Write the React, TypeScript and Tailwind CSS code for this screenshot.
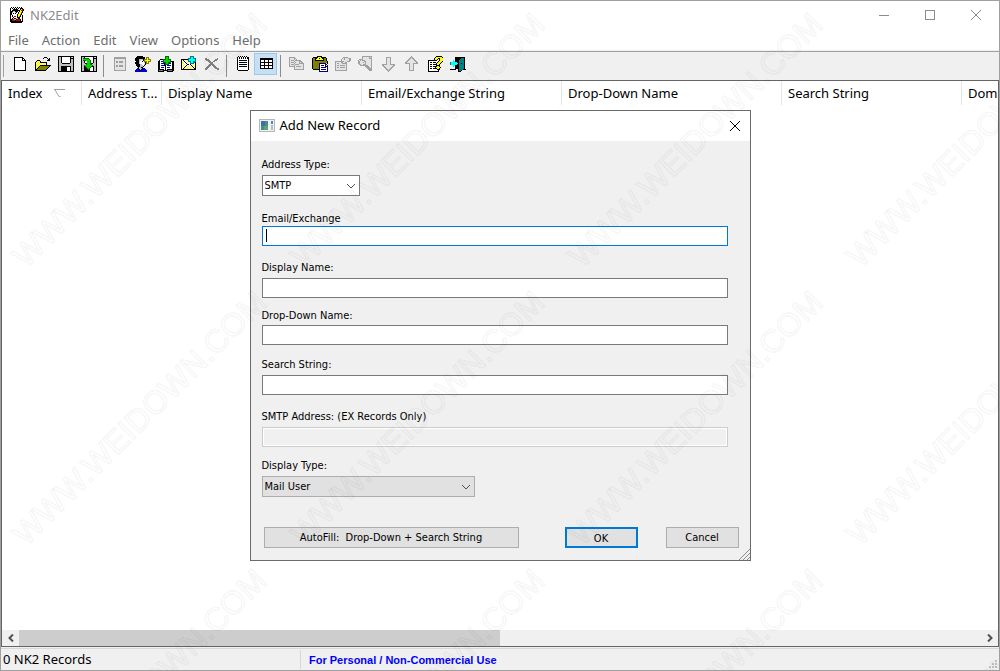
import type { ReactNode } from 'react'

const palette: Record<string, string> = {
  k: '#000000', w: '#ffffff', s: '#c0c0c0', g: '#a0a0a0', d: '#808080', e: '#e4e4e4',
  y: '#ffff00', o: '#808000', b: '#000080', u: '#0000d0', n: '#00d800', m: '#007000',
  c: '#00ffff', t: '#008080', r: '#c00000', f: '#fff8a0',
}

const icons: Record<string, string[]> = {
  app: [
    '..k.k.k.k.k.k...',
    '.kwkwkwkwkwkkk..',
    '.kwwkkkkkwwkyrk.',
    '.kwkkkkkkkkyrrk.',
    '.kkksskkkwkyyk..',
    '.kkswwskwkyyok..',
    '.kkwkwkwwkyyk...',
    '.kkwwwwwkyyok...',
    '.kwkwwwwkyykwk..',
    '.kwkwrrwkyokwk..',
    '.kwwkwwwkkkwwk..',
    '.kwkskksskkwwk..',
    '.kkrrsskrrrkwk..',
    '.kkrrrkrrrrkwk..',
    '.kkkkkkkkkkkkk..',
    '..kkkkkkkkkkk...',
  ],
  blank: [
    '................',
    '..kkkkkkkkk.....',
    '..kwwwwwwwkk....',
    '..kwwwwwwwkwk...',
    '..kwwwwwwwkkkk..',
    '..kwwwwwwwwwwk..',
    '..kwwwwwwwwwwk..',
    '..kwwwwwwwwwwk..',
    '..kwwwwwwwwwwk..',
    '..kwwwwwwwwwwk..',
    '..kwwwwwwwwwwk..',
    '..kwwwwwwwwwwk..',
    '..kwwwwwwwwwwk..',
    '..kwwwwwwwwwwk..',
    '..kkkkkkkkkkkk..',
    '................',
  ],
  open: [
    '................',
    '.........kkk....',
    '........k...k.k.',
    '.............kk.',
    '..kkk.......kkk.',
    '.kyfyk..........',
    'kyfyfkkkkkkk....',
    'kfyfyfyfyfyk....',
    'kyfyfyfyfyfk....',
    'kfyfykkkkkkkkkkk',
    'kyfykoooooooook.',
    'kfykoooooooook..',
    'kykoooooooook...',
    'kkoooooooook....',
    'kkkkkkkkkkk.....',
    '................',
  ],
  save: [
    'kkkkkkkkkkkkkkkk',
    'ksskwwwwwwwwksek',
    'ksskwwwwwwwwkkkk',
    'ksskwwwwwwwwkssk',
    'ksskwwwwwwwwkssk',
    'ksskwwwwwwwwkssk',
    'ksskwwwwwwwwkssk',
    'kssskkkkkkkksssk',
    'kssssssssssssssk',
    'kssssssssssssssk',
    'ksskkkkkkkkkkssk',
    'ksskkkkkkwwwkssk',
    'ksskkkkkkwwwkssk',
    'ksskkkkkkwwwkssk',
    'ksskkkkkkwwwkssk',
    'kkkkkkkkkkkkkkkk',
  ],
  saveAs: [
    'kkkkkkkkkkkkkkkk',
    'ksskwwwwwwwwksek',
    'ksmmmmmmwwwwkkkk',
    'ksnnnnnnmwwwkssk',
    'ksmmmnnnnmwwkssk',
    'ksskwwnnnmwwkssk',
    'ksskwwnnnmwwkssk',
    'kssskknnnmkksssk',
    'kssssmnnnmmssssk',
    'kssmnnnnnnnmsssk',
    'ksskmnnnnnmkkssk',
    'ksskkmnnnmwwkssk',
    'ksskkkmnmwwwkssk',
    'ksskkkkmkwwwkssk',
    'ksskkkkkkwwwkssk',
    'kkkkkkkkkkkkkkkk',
  ],
  record: [
    '................',
    '..gggggggggggg..',
    '..gggggggggggg..',
    '..geeeeeeeeeeg..',
    '..geeeeeeeeeeg..',
    '..geggeggggeeg..',
    '..geggeggggeeg..',
    '..geeeeeeeeeeg..',
    '..geeeeeeeeeeg..',
    '..geggeggggeeg..',
    '..geggeggggeeg..',
    '..geeeeeeeeeeg..',
    '..geeeeeeeeeeg..',
    '..geeeeeeeeeeg..',
    '..gggggggggggg..',
    '................',
  ],
  addUser: [
    '..kkkkkk........',
    '.kkkkkkkkk.ooo..',
    'kkkkkkkkkk.oyo..',
    'kkkksssskoooyooo',
    'kkkksswwkoyyyyyo',
    '.kkkswwkwoooyooo',
    'kkkkswwwwskoyo..',
    'kkkkswwwwwkooo..',
    '.kkkksswwsk.....',
    '.kkkkssswk......',
    '..kkksssk.......',
    '...ksskk........',
    '..ukssskuu......',
    '.uuukskuuuu.....',
    'uuuuukuuuuuu....',
    'uuuuuuuuuuuu....',
  ],
  addBook: [
    '.......mmmm.....',
    '.......mnnm.....',
    '.......mnnm.....',
    '..kkkmmmnnmmm...',
    '.kwwwmnnnnnnm...',
    'kkwuumnnnnnnmkkk',
    'kkwwwmmmnnmmmwkk',
    'kkwuuukmnnmuuwkk',
    'kkwwwwkmmmmwwwkk',
    'kkwuuukkwuuuuwkk',
    'kkwwwwwkwwwwwwkk',
    'kkwuuuwkwuuuwwkk',
    'kkwwwwwkwwwwwwkk',
    'kkkkkkwkwkkkkkkk',
    'kddddkkkkkddddkk',
    'kkkkkk...kkkkkk.',
  ],
  addMail: [
    '.........tttt...',
    '.........tcct...',
    '.......tttccttt.',
    'kkkkkkktcccccct.',
    'kwkwfwytcccccct.',
    'kfwkwfwtttccttt.',
    'kyfwkwfwftccttk.',
    'kfywwkwfwttttfk.',
    'kwfywwkkwkwyfwk.',
    'kfywfkwwwwkwyfk.',
    'kywfkwfywfwkwyk.',
    'kwfkwfywfywfkwk.',
    'kfkyfwyfwyfwfkk.',
    'kkkkkkkkkkkkkkk.',
    '................',
    '................',
  ],
  remove: [
    '................',
    '................',
    '.dd..........d..',
    '.dddd......ddd..',
    '..dddd....ddd...',
    '....ddd..dd.....',
    '.....dddd.......',
    '......ddd.......',
    '.....ddddd......',
    '....ddd.ddd.....',
    '...ddd...ddd....',
    '..ddd.....ddd...',
    '.ddd.......dddd.',
    '.dd..........dd.',
    '................',
    '................',
  ],
  notepad: [
    '...k.k.k.k.k....',
    '..kwkwkwkwkwkk..',
    '..kwkwkwkwkwkk..',
    '..kwwwwwwwwwwk..',
    '..kwkkkkkkkkwk..',
    '..kwwwwwwwwwwk..',
    '..kwkkkkkkkkwk..',
    '..kwwwwwwwwwwk..',
    '..kwkkkkkkkkwk..',
    '..kwwwwwwwwwwk..',
    '..kwkkkkkkkkwk..',
    '..kwwwwwwwwwwk..',
    '..kwwwwwwwwwwk..',
    '..kwwwwwwwwwwk..',
    '...kkkkkkkkkk...',
    '................',
  ],
  grid: [
    '................',
    '................',
    '..kkkkkkkkkkkkk.',
    '..kkkkkkkkkkkkk.',
    '..kwwwkwwwkwwwk.',
    '..kwwwkwwwkwwwk.',
    '..kkkkkkkkkkkkk.',
    '..kwwwkwwwkwwwk.',
    '..kwwwkwwwkwwwk.',
    '..kkkkkkkkkkkkk.',
    '..kwwwkwwwkwwwk.',
    '..kwwwkwwwkwwwk.',
    '..kkkkkkkkkkkkk.',
    '................',
    '................',
    '................',
  ],
  copy: [
    '................',
    'gggggg..........',
    'geeeegg.........',
    'geeeegeg........',
    'gegggegggggg....',
    'geeeegeeeeggg...',
    'gegggegeeegegg..',
    'geeeegeeeeggggg.',
    'gegggeggggeeeeg.',
    'geeeegeeeeeeeeg.',
    'ggggggegggggeeg.',
    '.....geeeeeeeeg.',
    '.....geeeeeeeeg.',
    '.....gggggggggg.',
    '................',
    '................',
  ],
  paste: [
    '.....kkkkk......',
    '.kkkkkyyykkkkk..',
    'kookkyykyykkook.',
    'kookyyyyyyykook.',
    'kookkkkkkkkkook.',
    'kooooooooooooook',
    'kooooooooooooook',
    'koooooobbbbbbb.k',
    'koooooobwwwwwbb.',
    'koooooobwbbbwbwb',
    'koooooobwwwwwbbb',
    'koooooobwbbbbbwb',
    'kooooookwwwwwwwb',
    '.kkkkkkbwbbbbbwb',
    '.......bwwwwwwwb',
    '.......bbbbbbbbb',
  ],
  properties: [
    '................',
    '........ggggg...',
    '.......gegeeeggg',
    '......geegeeeegg',
    '......geeeeeeegg',
    'gggggggggeeeggg.',
    'geeeeeggeegg....',
    'geggeeeggggg....',
    'geeeeeeeeeeg....',
    'geggegggggeg....',
    'geeeeeeeeeeg....',
    'geggegggggeg....',
    'geeeeeeeeeeg....',
    'geeeeeeeeeeg....',
    'gggggggggggg....',
    '................',
  ],
  find: [
    '....gggggggggg..',
    '....geeeeeegeg..',
    '....geeeeeeggg..',
    '.ggggeeeeeeeeg..',
    'gegegggeeeeeeg..',
    'ggeeeeggeeeeeg..',
    'ggeeegegeeeeeg..',
    'ggeeeeegeeeeeg..',
    '.ggeegggeeeeeg..',
    '..ggggggggeeeg..',
    '.......ggggeeg..',
    '........ggggeg..',
    '.........ggggg..',
    '..........gggg..',
    '...........ggg..',
    '................',
  ],
  down: [
    '................',
    '.....ggggg......',
    '.....geeeg......',
    '.....geeeg......',
    '.....geeeg......',
    '.....geeeg......',
    '.....geeeg......',
    '.....geeeg......',
    '.gggggeeeggggg..',
    '.ggeeeeeeeeegg..',
    '..ggeeeeeeegg...',
    '...ggeeeeegg....',
    '....ggeeegg.....',
    '.....ggegg......',
    '......ggg.......',
    '.......g........',
  ],
  help: [
    '.........kkkkkk.',
    '........kyyyyyyk',
    '.......kyyykkyyy',
    '.......kyyk.kyyy',
    '.kkkkkkkkk..kyyy',
    '.kwwwwwwwwwkyyyk',
    '.kwkkwkkkwkyyyk.',
    '.kwwwwwwwkyyyk..',
    '.kwkkwkkkkyyk...',
    '.kwwwwwwwkkkk...',
    '.kwkkwkkkkyyk...',
    '.kwwwwwwkyyyyk..',
    '.kwkkwkkkkyyk...',
    '.kwwwwwwwwkkk...',
    '.kwwwwwwwwwk....',
    '.kkkkkkkkkkk....',
  ],
  exit: [
    '................',
    '.....kkkkkkkkkk.',
    '.....kkkkkktttk.',
    '.....kkkkkttttk.',
    '...c.kkkktttttk.',
    '...cckkkktttttk.',
    'tcccccckktttttk.',
    'tccccccckttkttk.',
    'tcccccckktttttk.',
    '...cckkkktttttk.',
    '...c.kkkktttttk.',
    '.....kkkktttttk.',
    '.....kkkktttttk.',
    'kkkkkk..kttttkkk',
    '........kttk....',
    '........kkk.....',
  ],
}
icons.up = [...icons.down].reverse()

function PixelIcon({ name }: { name: string }) {
  const rects: ReactNode[] = []
  icons[name].forEach((row, y) => {
    let x = 0
    while (x < row.length) {
      let end = x + 1
      while (end < row.length && row[end] === row[x]) end++
      if (row[x] !== '.') {
        rects.push(<rect key={`${x}-${y}`} x={x} y={y} width={end - x} height={1} fill={palette[row[x]]} />)
      }
      x = end
    }
  })
  return (
    <svg className="shrink-0" width="16" height="16" viewBox="0 0 16 16" shapeRendering="crispEdges" aria-hidden="true">
      {rects}
    </svg>
  )
}

const toolbar = [
  [['blank', 'New'], ['open', 'Open'], ['save', 'Save'], ['saveAs', 'Save As']],
  [['record', 'Edit Record'], ['addUser', 'Add Record'], ['addBook', 'Add From Address Book'], ['addMail', 'Add Mail'], ['remove', 'Delete']],
  [['notepad', 'Text View'], ['grid', 'Grid View']],
  [['copy', 'Copy'], ['paste', 'Paste'], ['properties', 'Properties'], ['find', 'Find'], ['down', 'Move Down'], ['up', 'Move Up'], ['help', 'Help'], ['exit', 'Exit']],
]

const columns = [
  { title: 'Address T...', width: 'w-[80px]' },
  { title: 'Display Name', width: 'w-[200px]' },
  { title: 'Email/Exchange String', width: 'w-[200px]' },
  { title: 'Drop-Down Name', width: 'w-[220px]' },
  { title: 'Search String', width: 'w-[180px]' },
  { title: 'Domain', width: 'w-[120px]' },
]

function Watermark() {
  const marks: ReactNode[] = []
  for (let row = 0; row < 4; row++) {
    for (let col = 0; col < 4; col++) {
      const x = 25 + col * 278
      const y = 268 + row * 278
      marks.push(
        <text key={`${row}-${col}`} transform={`translate(${x} ${y}) rotate(-45)`} fontSize="32" fontFamily="Liberation Sans, Arial, sans-serif">
          WWW.WEIDOWN.COM
        </text>
      )
    }
  }
  return (
    <svg className="pointer-events-none absolute inset-0 h-full w-full" fill="none" stroke="#000000" strokeOpacity="0.04" strokeWidth="2" aria-hidden="true">
      {marks}
    </svg>
  )
}

function Chevron() {
  return (
    <svg className="pointer-events-none absolute right-1 top-[7px]" width="10" height="8" viewBox="0 0 10 8" fill="none" stroke="#505050" aria-hidden="true">
      <path d="M1 2l4 4 4-4" />
    </svg>
  )
}

function Field({ id, label, gap, disabled, focused }: { id: string; label: string; gap: string; disabled?: boolean; focused?: boolean }) {
  const look = disabled
    ? 'border-[#cccccc] bg-[#f0f0f0] shadow-[inset_0_0_0_1px_white]'
    : focused
      ? 'border-[#0078d7] bg-white'
      : 'border-[#7a7a7a] bg-white'
  return (
    <div className={`flex flex-col ${gap}`}>
      <label htmlFor={id} className="h-4 leading-[18px]">{label}</label>
      <div className="relative flex">
        <input id={id} type="text" disabled={disabled} className={`h-5 w-full border px-1 outline-none ${look}`} />
        {focused && <span className="absolute left-1 top-[3px] h-[13px] w-px bg-black" />}
      </div>
    </div>
  )
}

function AddRecordDialog() {
  return (
    <div role="dialog" aria-label="Add New Record" className="relative w-[501px] border border-[#6b6b6b] bg-[#f0f0f0] text-[11px] font-['DejaVu_Sans_Condensed',Tahoma,sans-serif]">
      <div className="flex h-[30px] items-center bg-white pl-2 pr-2.5">
        <svg width="16" height="14" viewBox="0 0 16 14" shapeRendering="crispEdges" aria-hidden="true">
          <rect width="16" height="13" fill="#b4b8bc" />
          <rect x="1" y="1" width="14" height="11" fill="#eef0f2" />
          <rect x="2" y="2" width="7" height="9" fill="#4a8a8c" />
          <rect x="2" y="2" width="4" height="5" fill="#3f6fa8" />
          <rect x="5" y="7" width="4" height="4" fill="#58a868" />
          <rect x="12" y="2" width="2" height="3" fill="#5f87a8" />
          <rect x="12" y="6" width="2" height="5" fill="#b8bcc0" />
        </svg>
        <span className="ml-[5px] flex-1 text-[13px] font-['Noto_Sans',sans-serif]">Add New Record</span>
        <button type="button" aria-label="Close">
          <svg width="10" height="10" viewBox="0 0 10 10" stroke="#000000" aria-hidden="true">
            <path d="M0 0l10 10M10 0L0 10" />
          </svg>
        </button>
      </div>

      <form className="pb-3 pl-[11px] pr-[22px] pt-[15px]" onSubmit={(e) => e.preventDefault()}>
        <div className="flex flex-col items-start gap-[3px]">
          <label htmlFor="address-type" className="h-4 leading-[18px]">Address Type:</label>
          <div className="relative w-[98px]">
            <select id="address-type" className="block h-[21px] w-full appearance-none border border-[#7a7a7a] bg-white px-0.5 pt-px outline-none">
              <option>SMTP</option>
              <option>EX</option>
            </select>
            <Chevron />
          </div>
        </div>

        <Field id="email" label="Email/Exchange" gap="mt-3.5" focused />
        <Field id="display-name" label="Display Name:" gap="mt-[13px] gap-[3px]" />
        <Field id="drop-down-name" label="Drop-Down Name:" gap="mt-[9px] gap-0.5" />
        <Field id="search-string" label="Search String:" gap="mt-[11px] gap-[3px]" />
        <Field id="smtp-address" label="SMTP Address: (EX Records Only)" gap="mt-[13px] gap-[3px]" disabled />

        <div className="mt-2.5 flex flex-col items-start gap-[3px]">
          <label htmlFor="display-type" className="h-4 leading-[18px]">Display Type:</label>
          <div className="relative w-[213px]">
            <select id="display-type" className="block h-[21px] w-full appearance-none border border-[#adadad] bg-[#e1e1e1] px-0.5 pt-px outline-none">
              <option>Mail User</option>
              <option>Distribution List</option>
            </select>
            <Chevron />
          </div>
        </div>

        <div className="-mr-[11px] ml-0.5 mt-[30px] flex">
          <button type="button" className="h-[21px] w-[255px] whitespace-pre border border-[#adadad] bg-[#e1e1e1] pt-0.5">AutoFill:  Drop-Down + Search String</button>
          <button type="submit" className="ml-auto h-[21px] w-[73px] border-2 border-[#0078d7] bg-[#e1e1e1] pt-0.5">OK</button>
          <button type="button" className="ml-7 h-[21px] w-[73px] border border-[#adadad] bg-[#e1e1e1] pt-0.5">Cancel</button>
        </div>
      </form>
      <svg className="absolute bottom-0 right-0" width="11" height="11" viewBox="0 0 11 11" stroke="#8c8c8c" aria-hidden="true">
        <path d="M0 11L11 0M4 11l7-7M8 11l3-3" />
      </svg>
    </div>
  )
}

export default function App() {
  return (
    <div className="relative flex min-h-screen flex-col overflow-hidden border border-[#a0a0a0] bg-[#f0f0f0] text-[13px] text-black font-['Noto_Sans',sans-serif]">
      <header className="flex h-[28px] items-center bg-white pl-2">
        <PixelIcon name="app" />
        <h1 className="ml-[5px] flex-1 pt-px text-[#8c8c8c]">NK2Edit</h1>
        <div className="flex">
          <button type="button" aria-label="Minimize" className="flex h-7 w-[46px] items-center justify-center">
            <svg width="10" height="10" viewBox="0 0 10 10" fill="#8c8c8c" aria-hidden="true"><rect y="5" width="10" height="1" /></svg>
          </button>
          <button type="button" aria-label="Maximize" className="flex h-7 w-[46px] items-center justify-center">
            <svg width="10" height="10" viewBox="0 0 10 10" fill="none" stroke="#8c8c8c" aria-hidden="true"><rect x="0.5" y="0.5" width="9" height="9" /></svg>
          </button>
          <button type="button" aria-label="Close" className="flex h-7 w-[46px] items-center justify-center">
            <svg width="10" height="10" viewBox="0 0 10 10" stroke="#8c8c8c" aria-hidden="true"><path d="M0 0l10 10M10 0L0 10" /></svg>
          </button>
        </div>
      </header>

      <nav className="flex h-[21px] items-center gap-[13px] bg-white pl-[7px] pt-[3px] text-[#6d6d6d]">
        {['File', 'Action', 'Edit', 'View', 'Options', 'Help'].map((item) => (
          <button key={item} type="button">{item}</button>
        ))}
      </nav>

      <div className="mt-px flex h-[29px] border-t border-[#a0a0a0] pl-0.5">
        <span className="my-[3px] mr-1 w-px bg-[#a0a0a0]" />
        {toolbar.map((group, i) => (
          <div key={i} className="flex">
            {i > 0 && <span className="mx-[3px] my-[3px] w-0.5 border-l border-[#8c8c8c]" />}
            {group.map(([name, title]) => (
              <button
                key={name}
                type="button"
                aria-label={title}
                className={`mt-px flex h-[22px] w-[23px] items-center justify-center ${name === 'grid' ? 'border border-[#99c9ef] bg-[#c4e0f5]' : ''}`}
              >
                <PixelIcon name={name} />
              </button>
            ))}
          </div>
        ))}
      </div>

      <main className="flex flex-1 flex-col overflow-hidden border border-[#646464] bg-white">
        <div className="flex-1 overflow-hidden">
          <table className="w-[1080px] table-fixed border-separate border-spacing-0">
            <thead>
              <tr className="h-6 text-left leading-5">
                <th scope="col" className="w-[80px] border-r border-[#e5e5e5] p-0 pl-1.5 font-normal">
                  <span className="flex items-center gap-3">
                    Index
                    <svg width="11" height="8" viewBox="0 0 11 8" fill="none" stroke="#a0a0a0" aria-hidden="true">
                      <path d="M0 .5h11M1 1l4 6.500h1.500" />
                    </svg>
                  </span>
                </th>
                {columns.map((col) => (
                  <th key={col.title} scope="col" className={`${col.width} whitespace-nowrap border-r border-[#e5e5e5] p-0 pl-1.5 font-normal`}>
                    {col.title}
                  </th>
                ))}
              </tr>
            </thead>
          </table>
        </div>
        <div className="flex h-4 bg-[#f0f0f0]">
          <button type="button" aria-label="Scroll left" className="flex w-[17px] items-center justify-center">
            <svg width="6" height="8" viewBox="0 0 6 8" fill="none" stroke="#505050" strokeWidth="2" aria-hidden="true"><path d="M5 .5L1.500 4 5 7.500" /></svg>
          </button>
          <div className="flex-1">
            <div className="h-full w-1/2 bg-[#cdcdcd]" />
          </div>
          <button type="button" aria-label="Scroll right" className="flex w-[17px] items-center justify-center">
            <svg width="6" height="8" viewBox="0 0 6 8" fill="none" stroke="#505050" strokeWidth="2" aria-hidden="true"><path d="M1 .5L4.500 4 1 7.500" /></svg>
          </button>
        </div>
      </main>

      <footer className="mt-px flex h-[22px] items-center border-t border-[#d7d7d7]">
        <span className="w-[299px] pl-0.5">0 NK2 Records</span>
        <span className="h-[19px] w-px bg-[#d7d7d7]" />
        <a href="#license" className="ml-2 flex-1 pt-px text-[11px] font-bold text-[#0000ff] font-['Liberation_Sans',Arial,sans-serif]">For Personal / Non-Commercial Use</a>
        <svg className="self-end" width="10" height="10" viewBox="0 0 10 10" fill="#bfbfbf" shapeRendering="crispEdges" aria-hidden="true">
          <path d="M6 0h2v2h-2zM3 3h2v2h-2zM6 3h2v2h-2zM0 6h2v2h-2zM3 6h2v2h-2zM6 6h2v2h-2z" />
        </svg>
      </footer>

      <div className="absolute inset-0 flex items-center justify-center">
        <AddRecordDialog />
      </div>
      <Watermark />
    </div>
  )
}
